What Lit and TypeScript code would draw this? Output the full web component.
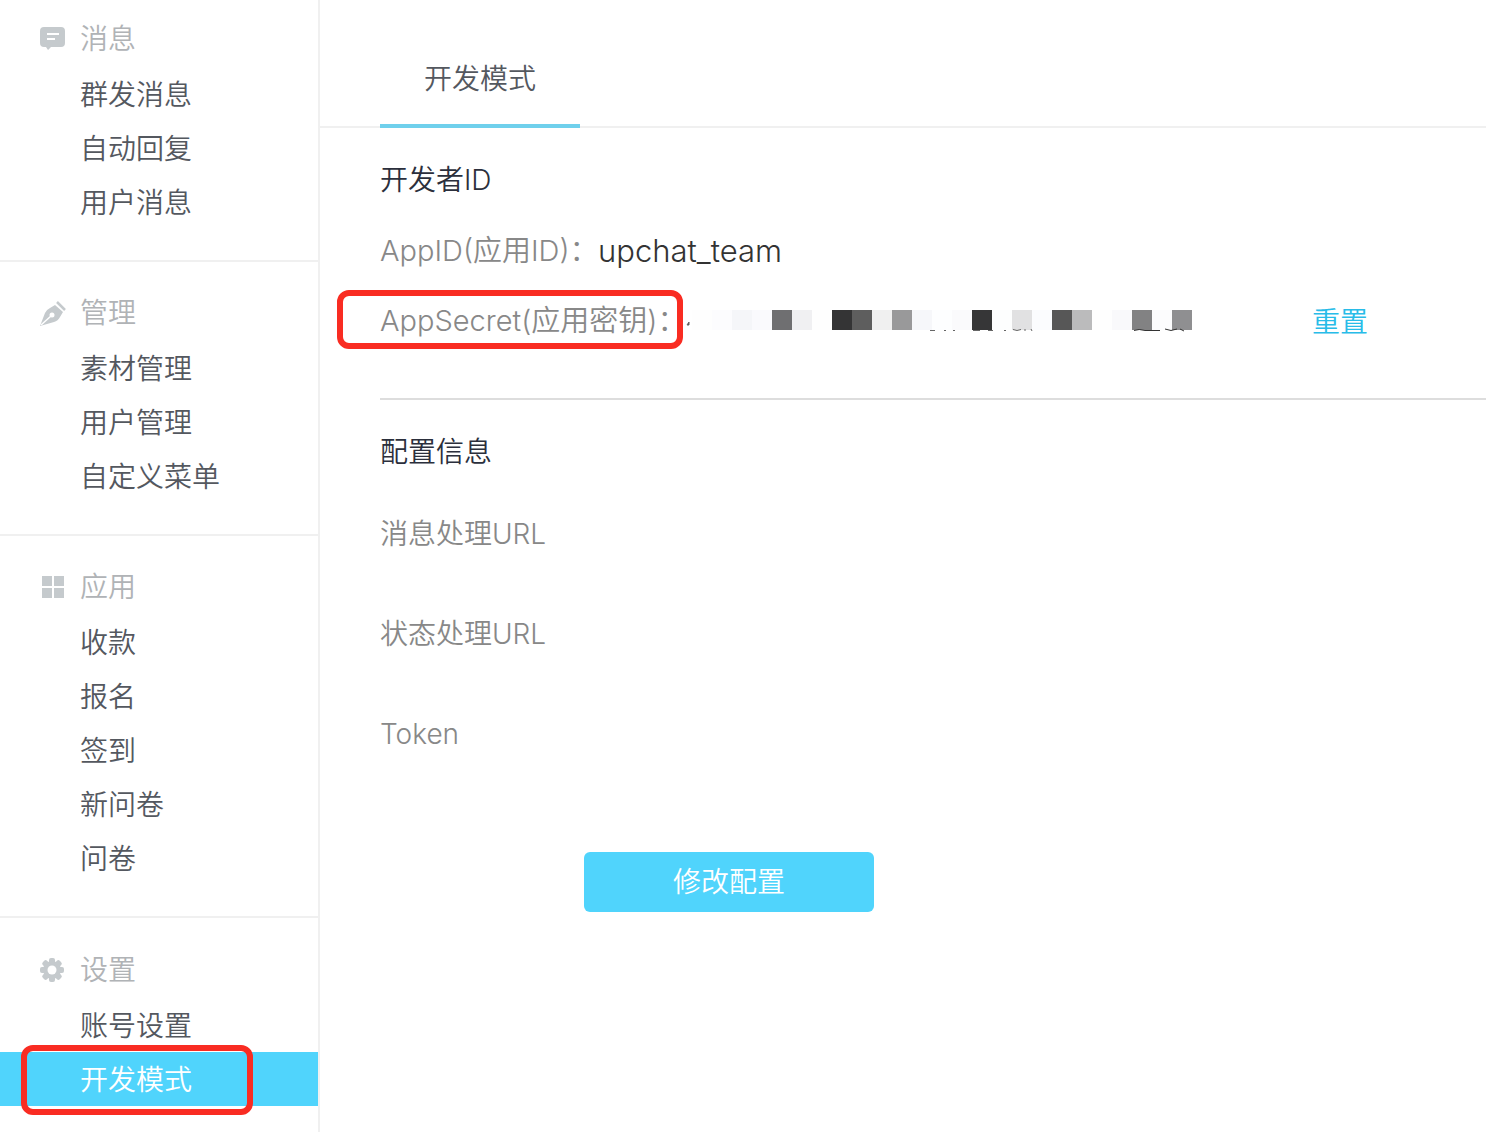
import { LitElement, html, css, svg } from "lit";
import { customElement } from "lit/decorators.js";

const icons: Record<string, unknown> = {
  message: svg`<path fill="#c5cacd" d="M4 3h17a4 4 0 0 1 4 4v12a4 4 0 0 1-4 4h-10l-3 3-2-3h-2a4 4 0 0 1-4-4V7a4 4 0 0 1 4-4z"/><path stroke="#fff" stroke-width="2" d="M7 10h12M7 15h8"/>`,
  pen: svg`<path fill="#c5cacd" d="M0 28L5 15Q6 12 10 10L15 7L23 14L20 19Q18 23 14 24Z"/><path stroke="#c5cacd" stroke-width="2.500" d="M17 4l8 8"/><path stroke="#fff" stroke-width="1.500" d="M1 27l10-9"/><circle cx="12" cy="17" r="2.500" fill="#fff"/>`,
  apps: svg`<path fill="#c5cacd" d="M2 4h10v10H2zM14 4h10v10H14zM2 16h10v10H2zM14 16h10v10H14z"/>`,
  gear: svg`<g fill="#c5cacd"><circle cx="12" cy="15" r="9"/>${[0, 45, 90, 135].map(
    (a) => svg`<rect x="9" y="3" width="6" height="24" rx="2" transform="rotate(${a} 12 15)"/>`
  )}</g><circle cx="12" cy="15" r="4.500" fill="#fff"/>`,
};

const sections = [
  { icon: "message", title: "消息", items: ["群发消息", "自动回复", "用户消息"] },
  { icon: "pen", title: "管理", items: ["素材管理", "用户管理", "自定义菜单"] },
  { icon: "apps", title: "应用", items: ["收款", "报名", "签到", "新问卷", "问卷"] },
  { icon: "gear", title: "设置", items: ["账号设置", "开发模式"] },
];

const mosaic = [
  "#fefefe", "#fcfcfe", "#f5f6f9", "#fafafd", "#6f6f71", "#f0f0f2", "#fefefe", "#343435", "#5e5e5e",
  "#f0f0f0", "#99999a", "#f6f7fa", "#fdfeff", "#fafafc", "#363637", "#fdfefe", "#e1e1e2", "#fbfcfe",
  "#575757", "#bbbbbc", "#fefefe", "#f9f9fb", "#828283", "#fcfcfd", "#8f8f91",
];

@customElement("app-root")
export class AppRoot extends LitElement {
  static styles = css`
    :host {
      display: flex;
      min-height: 100vh;
      background: #fff;
      color: #888;
      font: 28px/40px Inter, "Noto Sans CJK SC", sans-serif;
      font-weight: 350;
      overflow: hidden;
    }
    * { box-sizing: border-box; }
    a { color: inherit; text-decoration: none; }
    h2, h3, ul { margin: 0; padding: 0; font: inherit; }
    ul { list-style: none; }
    .side {
      flex: 0 0 320px;
      border-right: 2px solid #f0f0f0;
      color: #54585f;
    }
    .section { padding: 21px 0 31px; border-bottom: 2px solid #f0f0f0; }
    .section:first-child { padding-top: 9px; }
    .section:last-child { border-bottom: 0; padding: 22px 0 0; }
    .title {
      display: flex;
      align-items: center;
      gap: 14px;
      height: 58px;
      padding: 2px 0 0 40px;
      color: #b0b3b6;
    }
    .icon { width: 26px; height: 28px; fill: none; }
    .item {
      position: relative;
      display: block;
      height: 54px;
      padding-left: 80px;
      line-height: 56px;
    }
    .active { background: #50d4fc; color: #fff; }
    .mark {
      position: absolute;
      border: 6px solid #f92c22;
      border-radius: 12px;
      pointer-events: none;
    }
    .mark-item { inset: -7px 65px -9px 21px; }
    .mark-label { inset: -11px -13px -8px -43px; }
    .main { flex: 1; min-width: 0; }
    .tabs { height: 128px; padding-left: 60px; border-bottom: 2px solid #f0f0f0; }
    .tab {
      display: block;
      width: 200px;
      height: 128px;
      padding-top: 28px;
      border-bottom: 4px solid #6fd0ec;
      color: #54585f;
      line-height: 102px;
      text-align: center;
    }
    .panel { padding-left: 60px; }
    .heading { color: #2b2f3c; }
    .identity { padding: 32px 0 57px; border-bottom: 2px solid #ddd; }
    .row { display: flex; align-items: center; height: 40px; }
    .heading + .row { margin-top: 31px; }
    .row + .row { margin-top: 30px; }
    .label { position: relative; width: 290px; font-size: 29px; white-space: nowrap; }
    .short { width: 218px; }
    .value { color: #333; font-size: 31px; }
    .secret { position: relative; display: flex; margin: 0 0 2px 22px; }
    .tile { width: 20px; height: 20px; }
    .traces { position: absolute; left: -6px; top: 0; width: 510px; height: 24px; }
    .reset { margin: 2px 0 0 120px; color: #28bce8; }
    .config { padding-top: 32px; }
    .fields { padding-top: 42px; }
    .field { height: 100px; }
    .save {
      display: block;
      width: 290px;
      height: 60px;
      margin: 38px 0 0 204px;
      border: 0;
      border-radius: 6px;
      background: #50d4fc;
      color: #fff;
      font: inherit;
    }
  `;

  render() {
    return html`
      <nav class="side">
        ${sections.map(
          (s) => html`<section class="section">
            <h2 class="title"><svg class="icon" viewBox="0 1 26 28" aria-hidden="true">${icons[s.icon]}</svg>${s.title}</h2>
            <ul>
              ${s.items.map((name) =>
                name === "开发模式"
                  ? html`<li><a class="item active" href="#" aria-current="page">${name}<span class="mark mark-item"></span></a></li>`
                  : html`<li><a class="item" href="#">${name}</a></li>`
              )}
            </ul>
          </section>`
        )}
      </nav>
      <main class="main">
        <nav class="tabs"><a class="tab" href="#">开发模式</a></nav>
        <div class="panel">
          <section class="identity">
            <h3 class="heading">开发者ID</h3>
            <div class="row"><span class="label short">AppID(应用ID)：</span><span class="value">upchat_team</span></div>
            <div class="row">
              <span class="label">AppSecret(应用密钥)：<span class="mark mark-label"></span></span>
              <span class="secret">
                ${mosaic.map((c) => html`<span class="tile" style="background:${c}"></span>`)}
                <svg class="traces" viewBox="0 0 510 24" fill="none" stroke="#666" stroke-width="1" aria-hidden="true">
                  <path d="M1 15l2-3v3z" fill="#444"/>
                  <path d="M244 20.500h5M258 20.500h2M267 20.500h2M287 20.500h7M302 20.500h5M318 20.500h2M327 19.500q4 2 8 0M339 19v2M345 19l1 2"/>
                  <path stroke="#333" d="M448 20.500q5-2 11 0h15M479 19q6 3 12 0M494 19l4 2"/>
                </svg>
              </span>
              <a class="reset" href="#">重置</a>
            </div>
          </section>
          <section class="config">
            <h3 class="heading">配置信息</h3>
            <div class="fields">
              <div class="field">消息处理URL</div>
              <div class="field">状态处理URL</div>
              <div class="field">Token</div>
            </div>
            <button class="save" type="button">修改配置</button>
          </section>
        </div>
      </main>
    `;
  }
}
